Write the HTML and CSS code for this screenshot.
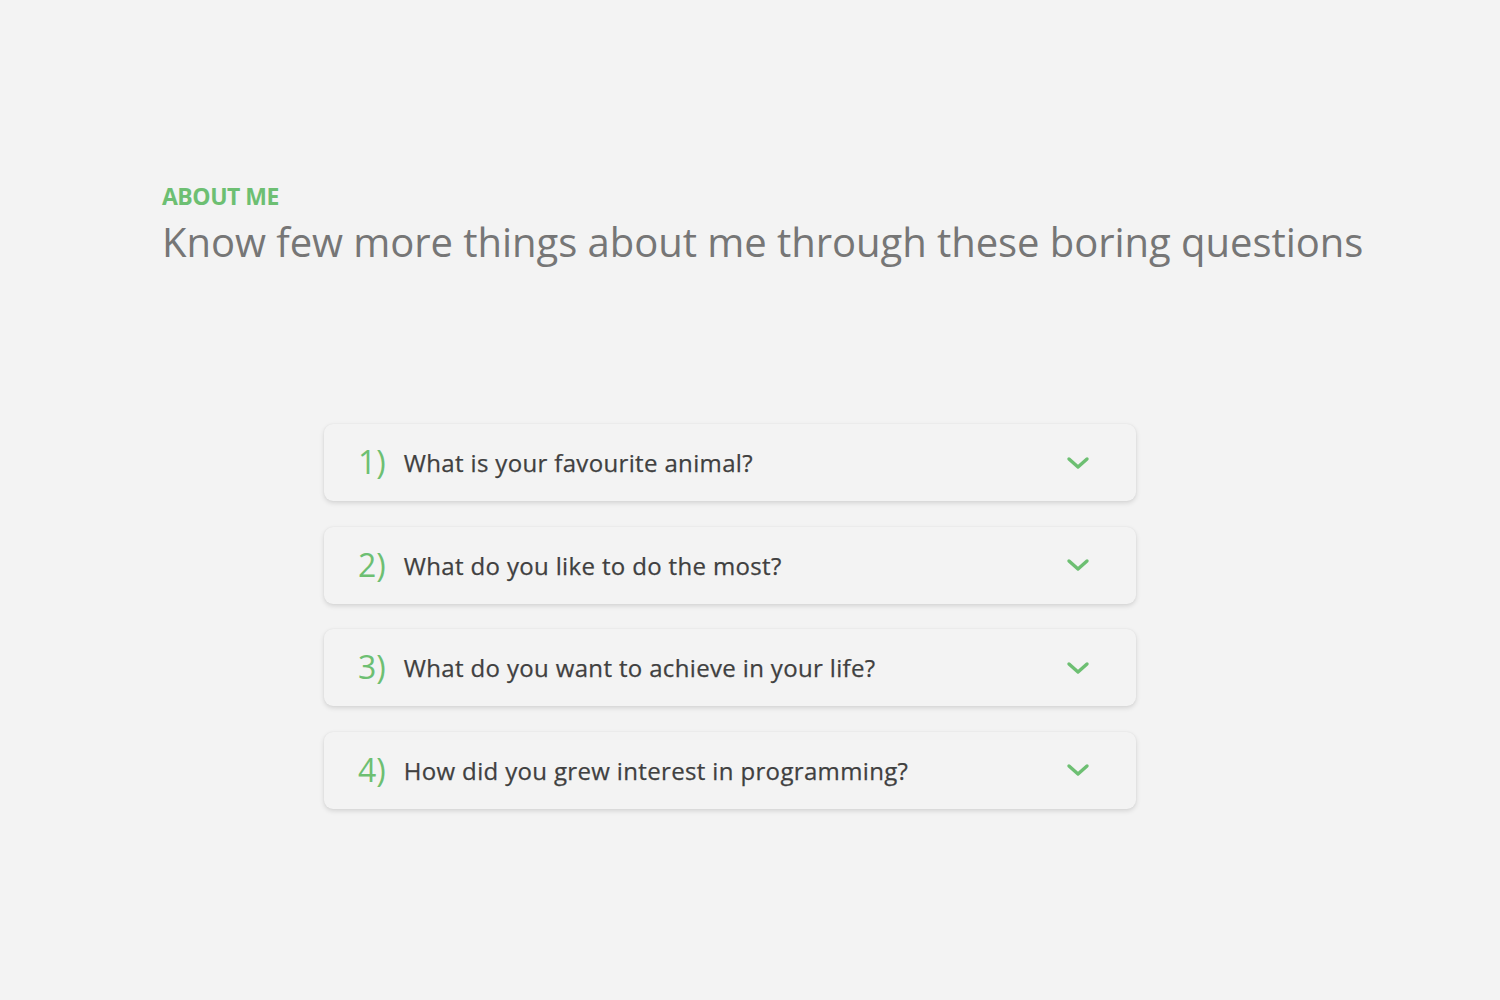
FILE: index.html
```html
<!DOCTYPE html>
<html lang="en">
<head>
<meta charset="utf-8">
<title>About me</title>
<link rel="stylesheet" href="styles.css">
</head>
<body>
<section class="about">
  <header class="about-head">
    <p class="eyebrow">ABOUT ME</p>
    <h1 class="title">Know few more things about me through these boring questions</h1>
  </header>
  <div class="faq">
    <div class="faq-item">
      <span class="num">1)</span>
      <span class="question">What is your favourite animal?</span>
      <svg class="chev" viewBox="0 0 24 14" width="24" height="14"><path d="M3 3 L12 11 L21 3" fill="none" stroke="#6dbf72" stroke-width="3.4" stroke-linecap="round" stroke-linejoin="round"/></svg>
    </div>
    <div class="faq-item">
      <span class="num">2)</span>
      <span class="question">What do you like to do the most?</span>
      <svg class="chev" viewBox="0 0 24 14" width="24" height="14"><path d="M3 3 L12 11 L21 3" fill="none" stroke="#6dbf72" stroke-width="3.4" stroke-linecap="round" stroke-linejoin="round"/></svg>
    </div>
    <div class="faq-item">
      <span class="num">3)</span>
      <span class="question">What do you want to achieve in your life?</span>
      <svg class="chev" viewBox="0 0 24 14" width="24" height="14"><path d="M3 3 L12 11 L21 3" fill="none" stroke="#6dbf72" stroke-width="3.4" stroke-linecap="round" stroke-linejoin="round"/></svg>
    </div>
    <div class="faq-item">
      <span class="num">4)</span>
      <span class="question">How did you grew interest in programming?</span>
      <svg class="chev" viewBox="0 0 24 14" width="24" height="14"><path d="M3 3 L12 11 L21 3" fill="none" stroke="#6dbf72" stroke-width="3.4" stroke-linecap="round" stroke-linejoin="round"/></svg>
    </div>
  </div>
</section>
</body>
</html>
```
FILE: styles.css
```css
html, body {
  margin: 0;
  padding: 0;
  background: #f3f3f3;
}
body {
  font-family: "Open Sans", "Noto Sans", sans-serif;
  width: 1500px;
  height: 1000px;
  overflow: hidden;
}
.about {
  padding: 180px 0 0 162px;
}
.about-head {
  margin: 0;
}
.eyebrow {
  margin: 0;
  color: #6dbf72;
  font-size: 23px;
  font-weight: 700;
  line-height: 32px;
  letter-spacing: -0.5px;
}
.title {
  margin: 2px 0 0;
  color: #767676;
  font-size: 40px;
  font-weight: 400;
  line-height: 56px;
  letter-spacing: -0.05px;
}
.faq {
  margin: 154px 0 0 162px;
  width: 812px;
  display: flex;
  flex-direction: column;
  gap: 25.5px;
}
.faq-item {
  height: 77px;
  box-sizing: border-box;
  display: flex;
  align-items: center;
  padding: 0 46px 0 34px;
  background: #f3f3f3;
  border-radius: 9px;
  box-shadow: 0 2px 5px rgba(0, 0, 0, 0.13), 0 0 2px rgba(0, 0, 0, 0.06);
}
.num {
  color: #6dbf72;
  font-size: 32px;
  font-weight: 400;
  flex: none;
  margin-right: 18px;
  margin-top: -2px;
}
.question {
  flex: 1;
  color: #404040;
  font-size: 24px;
  font-weight: 400;
  letter-spacing: 0.35px;
  margin-top: 0;
  -webkit-text-stroke: 0.25px #404040;
}
.chev {
  flex: none;
  display: block;
}
```
